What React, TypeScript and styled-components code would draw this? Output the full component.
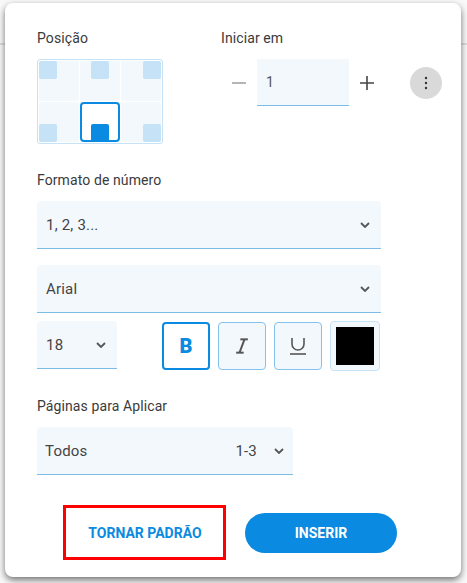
import styled, { createGlobalStyle } from 'styled-components';
import { Italic, Underline } from 'lucide-react';

const GlobalStyle = createGlobalStyle`
  html, body {
    margin: 0;
    padding: 0;
    background: #f9f9f9;
  }
  * {
    box-sizing: border-box;
  }
`;

const Page = styled.div`
  position: relative;
  width: 467px;
  height: 583px;
  overflow: hidden;
  font-family: Roboto, "Liberation Sans", sans-serif;
  color: #333;
`;

const BackdropBar = styled.div`
  height: 45px;
  border-bottom: 2px solid #dedede;
`;

const Modal = styled.div`
  position: absolute;
  left: 5px;
  top: 3px;
  width: 456px;
  height: 574px;
  padding: 26px 32px 0;
  background: #fff;
  border-radius: 8px;
  box-shadow: 0 3px 7px rgba(0, 0, 0, 0.55);
`;

const Label = styled.div`
  font-size: 14px;
  line-height: 18px;
  letter-spacing: 0.1px;
  color: #3a3a3a;
`;

const TopRow = styled.div`
  display: flex;
  gap: 58px;
`;

const PositionGrid = styled.div`
  display: grid;
  grid-template-columns: repeat(3, 40px);
  grid-template-rows: repeat(2, 40px);
  gap: 1px;
  width: 126px;
  height: 85px;
  margin-top: 12px;
  padding: 1px;
  background: #fff;
  border: 1px solid #c6e2f7;
  border-radius: 3px;
`;

const PositionCell = styled.div<{ $selected?: boolean; $bottom?: boolean; $align: string }>`
  display: flex;
  justify-content: ${(p) => p.$align};
  align-items: ${(p) => (p.$bottom ? 'flex-end' : 'flex-start')};
  background: ${(p) => (p.$selected ? '#fff' : '#f3f8fd')};
  border: ${(p) => (p.$selected ? '2px solid #0a8ae0' : 'none')};
  border-radius: ${(p) => (p.$selected ? '4px' : '2px')};
`;

const PositionMark = styled.div<{ $selected?: boolean }>`
  width: 18px;
  height: 18px;
  margin-bottom: ${(p) => (p.$selected ? '-2px' : '0')};
  background: ${(p) => (p.$selected ? '#0a8ae0' : '#c5e2f7')};
  border-radius: ${(p) => (p.$selected ? '2px 2px 0 0' : '2px')};
`;

const StartColumn = styled.div`
  display: flex;
  flex-direction: column;
`;

const StartRow = styled.div`
  display: flex;
  align-items: center;
  margin-top: 12px;
`;

const StepIcon = styled.svg`
  display: block;
  width: 14px;
  height: 14px;
  flex: none;
`;

const StepSlot = styled.div`
  display: flex;
  width: 36px;
  padding-left: 11px;
`;

const NumberField = styled.div`
  width: 92px;
  height: 47px;
  padding: 0 9px;
  display: flex;
  align-items: center;
  font-size: 14px;
  color: #555;
  background: #f3f8fd;
  border-bottom: 1px solid #7dbce6;
`;

const MoreButton = styled.div`
  display: flex;
  align-items: center;
  justify-content: center;
  width: 32px;
  height: 32px;
  margin-left: 25px;
  border-radius: 50%;
  background: #d9d9d9;
`;

const SectionLabel = styled(Label)<{ $top: number }>`
  margin-top: ${(p) => p.$top}px;
`;

const SelectBox = styled.div<{ $width: number; $top: number; $inset?: number; $end?: number }>`
  display: flex;
  align-items: center;
  width: ${(p) => p.$width}px;
  height: 48px;
  margin-top: ${(p) => p.$top}px;
  padding: 0 ${(p) => p.$end ?? 11}px 0 ${(p) => p.$inset ?? 9}px;
  font-size: 15px;
  letter-spacing: 0.2px;
  color: #444;
  background: #f3f8fd;
  border-bottom: 1px solid #7dbce6;
  border-radius: 4px 4px 0 0;
`;

const SelectText = styled.span`
  flex: 1;
`;

const SelectRange = styled.span`
  margin-right: 17px;
`;

const Chevron = styled.svg`
  display: block;
  width: 10px;
  height: 6px;
  flex: none;
`;

const StyleRow = styled.div`
  display: flex;
  align-items: flex-start;
  margin-top: 8px;
`;

const FormatGroup = styled.div`
  display: flex;
  align-items: center;
  gap: 8px;
  margin-left: 45px;
`;

const FormatButton = styled.div<{ $active?: boolean }>`
  display: flex;
  align-items: center;
  justify-content: center;
  width: 48px;
  height: 48px;
  font-size: 20px;
  color: ${(p) => (p.$active ? '#0a8ae0' : '#555')};
  background: ${(p) => (p.$active ? '#fff' : '#f3f8fd')};
  border: ${(p) => (p.$active ? '2px solid #0a8ae0' : '1px solid #85c2ec')};
  border-radius: 4px;
`;

const BoldGlyph = styled.span`
  font-weight: 900;
`;

const ColorButton = styled.div`
  display: flex;
  align-items: center;
  justify-content: center;
  width: 50px;
  height: 50px;
  background: #f3f8fd;
  border: 1px solid #c6e2f7;
  border-radius: 4px;
`;

const ColorSwatch = styled.div`
  width: 38px;
  height: 38px;
  background: #000;
`;

const ActionRow = styled.div`
  display: flex;
  align-items: center;
  gap: 19px;
  margin: 30px 0 0 26px;
`;

const DefaultButton = styled.div`
  display: flex;
  align-items: center;
  justify-content: center;
  width: 163px;
  height: 55px;
  padding-left: 1px;
  font-size: 14px;
  font-weight: 700;
  color: #0a8ae0;
  border: 3px solid #f00;
`;

const InsertButton = styled.div`
  display: flex;
  align-items: center;
  justify-content: center;
  width: 152px;
  height: 40px;
  font-size: 14px;
  font-weight: 700;
  color: #fff;
  background: #0a8ae0;
  border-radius: 20px;
`;

const ChevronDown = () => (
  <Chevron viewBox="0 0 10 6">
    <path d="M1 1l4 4 4-4" fill="none" stroke="#555" strokeWidth="1.8" />
  </Chevron>
);

const cells = [
  { align: 'flex-start' },
  { align: 'center' },
  { align: 'flex-end' },
  { align: 'flex-start', bottom: true },
  { align: 'center', bottom: true, selected: true },
  { align: 'flex-end', bottom: true },
];

const App = () => (
  <Page>
    <GlobalStyle />
    <BackdropBar />
    <Modal>
      <TopRow>
        <div>
          <Label>Posição</Label>
          <PositionGrid>
            {cells.map((c) => (
              <PositionCell key={`${c.align}-${c.bottom}`} $align={c.align} $bottom={c.bottom} $selected={c.selected}>
                <PositionMark $selected={c.selected} />
              </PositionCell>
            ))}
          </PositionGrid>
        </div>
        <StartColumn>
          <Label>Iniciar em</Label>
          <StartRow>
            <StepSlot>
              <StepIcon viewBox="0 0 14 14">
                <path d="M0 7h14" stroke="#a3a3a3" strokeWidth="1.6" />
              </StepIcon>
            </StepSlot>
            <NumberField>1</NumberField>
            <StepSlot>
              <StepIcon viewBox="0 0 14 14">
                <path d="M0 7h14M7 0v14" stroke="#444" strokeWidth="1.6" />
              </StepIcon>
            </StepSlot>
            <MoreButton>
              <svg width="4" height="14" viewBox="0 0 4 14">
                <circle cx="2" cy="2" r="1.2" fill="#333" />
                <circle cx="2" cy="7" r="1.2" fill="#333" />
                <circle cx="2" cy="12" r="1.2" fill="#333" />
              </svg>
            </MoreButton>
          </StartRow>
        </StartColumn>
      </TopRow>
      <SectionLabel $top={27}>Formato de número</SectionLabel>
      <SelectBox $width={344} $top={12}>
        <SelectText>1, 2, 3...</SelectText>
        <ChevronDown />
      </SelectBox>
      <SelectBox $width={344} $top={16}>
        <SelectText>Arial</SelectText>
        <ChevronDown />
      </SelectBox>
      <StyleRow>
        <SelectBox $width={80} $top={0}>
          <SelectText>18</SelectText>
          <ChevronDown />
        </SelectBox>
        <FormatGroup>
          <FormatButton $active>
            <BoldGlyph>B</BoldGlyph>
          </FormatButton>
          <FormatButton>
            <Italic size={20} strokeWidth={2.4} strokeLinecap="butt" />
          </FormatButton>
          <FormatButton>
            <Underline size={24} strokeWidth={1.6} strokeLinecap="butt" />
          </FormatButton>
          <ColorButton>
            <ColorSwatch />
          </ColorButton>
        </FormatGroup>
      </StyleRow>
      <SectionLabel $top={26}>Páginas para Aplicar</SectionLabel>
      <SelectBox $width={256} $top={12} $inset={8} $end={9}>
        <SelectText>Todos</SelectText>
        <SelectRange>1-3</SelectRange>
        <ChevronDown />
      </SelectBox>
      <ActionRow>
        <DefaultButton>TORNAR PADRÃO</DefaultButton>
        <InsertButton>INSERIR</InsertButton>
      </ActionRow>
    </Modal>
  </Page>
);

export default App;
